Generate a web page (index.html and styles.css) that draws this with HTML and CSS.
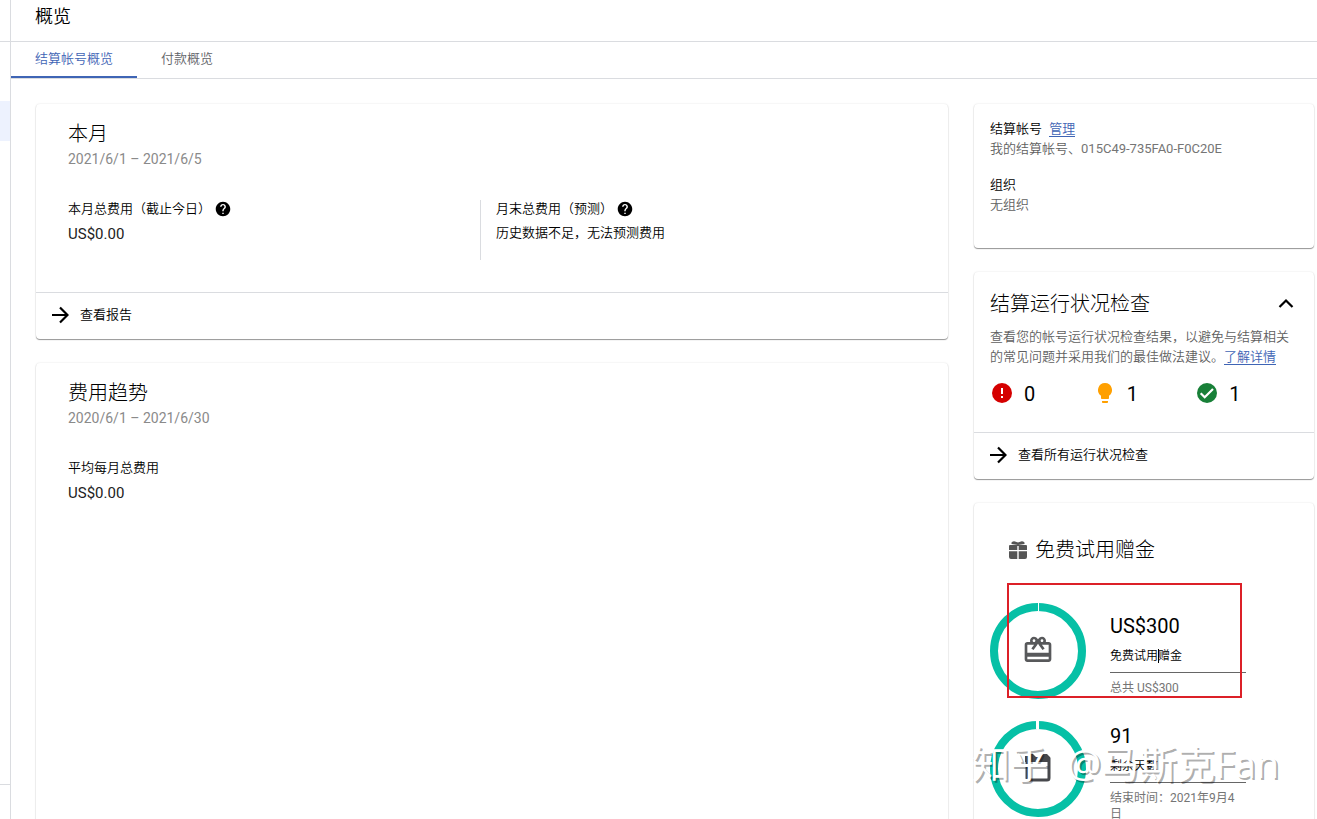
FILE: index.html
```html
<!DOCTYPE html>
<html lang="zh-CN">
<head>
<meta charset="utf-8">
<meta name="viewport" content="width=device-width, initial-scale=1">
<title>概览</title>
<link rel="stylesheet" href="styles.css">
</head>
<body>
<div class="app">
  <aside class="rail">
    <div class="rail-head"></div>
    <div class="rail-active"></div>
    <div class="rail-foot"></div>
  </aside>
  <main class="main">
    <header class="page-header"><h1 class="page-title">概览</h1></header>
    <nav class="tabs">
      <a class="tab tab-active" href="#account">结算帐号概览</a>
      <a class="tab" href="#payment">付款概览</a>
    </nav>
    <div class="content">
      <div class="column">
        <section class="card">
          <div class="card-body">
            <h2 class="card-title">本月</h2>
            <p class="period">2021/6/1 – 2021/6/5</p>
            <div class="metrics">
              <div class="metric">
                <div class="metric-label">本月总费用（截止今日）
                  <button class="icon-button" type="button" aria-label="帮助"><svg width="16" height="16" viewBox="1 1 22 22"><path d="M12 2C6.480 2 2 6.480 2 12s4.480 10 10 10 10-4.480 10-10S17.520 2 12 2zm1 17h-2v-2h2v2zm2.070-7.750l-.9.920C13.450 12.900 13 13.500 13 15h-2v-.5c0-1.100.45-2.100 1.170-2.830l1.240-1.260c.37-.36.59-.86.59-1.410 0-1.100-.9-2-2-2s-2 .9-2 2H8c0-2.210 1.790-4 4-4s4 1.790 4 4c0 .88-.36 1.680-.93 2.250z"/></svg></button>
                </div>
                <div class="amount">US$0.00</div>
              </div>
              <div class="metric metric-split">
                <div class="metric-label">月末总费用（预测）
                  <button class="icon-button" type="button" aria-label="帮助"><svg width="16" height="16" viewBox="1 1 22 22"><path d="M12 2C6.480 2 2 6.480 2 12s4.480 10 10 10 10-4.480 10-10S17.520 2 12 2zm1 17h-2v-2h2v2zm2.070-7.750l-.9.920C13.450 12.900 13 13.500 13 15h-2v-.5c0-1.100.45-2.100 1.170-2.830l1.240-1.260c.37-.36.59-.86.59-1.410 0-1.100-.9-2-2-2s-2 .9-2 2H8c0-2.210 1.790-4 4-4s4 1.790 4 4c0 .88-.36 1.680-.93 2.250z"/></svg></button>
                </div>
                <div class="metric-note">历史数据不足，无法预测费用</div>
              </div>
            </div>
          </div>
          <a class="card-link" href="#report"><svg width="18" height="18" viewBox="3 3 18 18"><path d="M4 12h15M12 4.500l7.500 7.500-7.500 7.500" fill="none" stroke="#000" stroke-width="2.200"/></svg>查看报告</a>
        </section>
        <section class="card card-trend">
          <div class="card-body">
            <h2 class="card-title">费用趋势</h2>
            <p class="period">2020/6/1 – 2021/6/30</p>
            <div class="metrics">
              <div class="metric">
                <div class="metric-label">平均每月总费用</div>
                <div class="amount">US$0.00</div>
              </div>
            </div>
          </div>
        </section>
      </div>

      <div class="column">
        <section class="card account">
          <h2 class="account-title">结算帐号 <a class="link" href="#manage">管理</a></h2>
          <p class="account-text">我的结算帐号、<span class="account-id">015C49-735FA0-F0C20E</span></p>
          <h2 class="account-title account-org">组织</h2>
          <p class="account-text">无组织</p>
        </section>

        <section class="card">
          <div class="health">
            <div class="health-head">
              <h2 class="health-title">结算运行状况检查</h2>
              <button class="icon-button" type="button" aria-label="收起"><svg width="24" height="24" viewBox="0 0 24 24"><path d="M5.500 15l6.500-6.500 6.500 6.500" fill="none" stroke="#000" stroke-width="2.200"/></svg></button>
            </div>
            <p class="health-text">查看您的帐号运行状况检查结果，以避免与结算相关的常见问题并采用我们的最佳做法建议。<a class="link" href="#more">了解详情</a></p>
            <div class="checks">
              <div class="check"><svg width="24" height="24" viewBox="0 0 24 24"><circle cx="12" cy="11" r="10" fill="#d50000"/><path d="M11 6h2v6h-2zM11 14h2v2h-2z" fill="#fff"/></svg>0</div>
              <div class="check"><svg width="24" height="24" viewBox="0 0 24 24"><path d="M9 20c0 .5.4 1 1 1h4c.6 0 1-.5 1-1v-1H9zM12 1a7 7 0 0 0-4 12.740V16c0 .55.45 1 1 1h6c.55 0 1-.45 1-1v-2.260A7 7 0 0 0 12 1z" fill="#ffa000"/></svg>1</div>
              <div class="check"><svg width="24" height="24" viewBox="0 0 24 24"><circle cx="12" cy="11" r="10" fill="#188038"/><path d="M5.700 11.300l4 4 8.300-8.300" fill="none" stroke="#fff" stroke-width="2.200"/></svg>1</div>
            </div>
          </div>
          <a class="card-link" href="#health"><svg width="18" height="18" viewBox="3 3 18 18"><path d="M4 12h15M12 4.500l7.500 7.500-7.500 7.500" fill="none" stroke="#000" stroke-width="2.200"/></svg>查看所有运行状况检查</a>
        </section>

        <section class="card trial">
          <h2 class="trial-title"><svg width="18" height="18" viewBox="0 0 18 18"><path d="M1 4h16q1 0 1 1v4H9.700V5H8.300v4H0V5q0-1 1-1zM0 10.300h8.300V18H2q-2 0-2-2zM9.700 10.300H18V16q0 2-2 2H9.700zM2.500 3V1.500Q4 0 6 .4L9 1.500l3-1.100q2-.4 3.500 1.100V3L9 4z" fill="#555"/></svg>免费试用赠金</h2>
          <div class="meter-list">
            <div class="meter">
              <svg class="ring" viewBox="0 0 96 96"><circle cx="48" cy="48" r="44" fill="none" stroke="#06c0a6" stroke-width="8"/><path d="M48.500 0v8" stroke="#fff"/><svg x="32" y="31" width="32" height="32" viewBox="0 0 24 24"><path d="M20 6h-2.180c.11-.31.18-.65.18-1 0-1.660-1.340-3-3-3-1.050 0-1.960.54-2.500 1.350l-.5.670-.5-.68C10.960 2.540 10.050 2 9 2 7.340 2 6 3.340 6 5c0 .35.070.69.18 1H4c-1.110 0-1.990.89-1.990 2L2 19c0 1.110.89 2 2 2h16c1.110 0 2-.89 2-2V8c0-1.110-.89-2-2-2zm-5-2c.55 0 1 .45 1 1s-.45 1-1 1-1-.45-1-1 .45-1 1-1zM9 4c.55 0 1 .45 1 1s-.45 1-1 1-1-.45-1-1 .45-1 1-1zm11 15H4v-2h16v2zm0-5H4V8h5.080L7 10.830 8.620 12 11 8.760l1-1.360 1 1.360L15.380 12 17 10.830 14.920 8H20v6z" fill="#58595b"/></svg></svg>
              <div class="meter-info">
                <div class="meter-value">US$300</div>
                <div class="meter-label">免费试用<span class="caret"></span>赠金</div>
                <div class="meter-note">总共 US$300</div>
              </div>
            </div>
            <div class="meter">
              <svg class="ring" viewBox="0 0 96 96"><circle cx="48" cy="48" r="44" fill="none" stroke="#06c0a6" stroke-width="8"/><path d="M47.500 0v8" stroke="#fff" stroke-width="3"/><path d="M37 38h22v19q0 2-2 2H39q-2 0-2-2z" fill="none" stroke="#47484c" stroke-width="3"/><path d="M35 35h4v-2h4l3 3h4l3-3h4l3 3v5H35z" fill="#47484c"/></svg>
              <div class="meter-info">
                <div class="meter-value">91</div>
                <div class="meter-label">剩余天数</div>
                <div class="meter-note">结束时间：2021年9月4日</div>
              </div>
            </div>
            <div class="highlight"></div>
            <div class="watermark"><span>知乎</span><span>@马斯克Fan</span></div>
          </div>
        </section>
      </div>
    </div>
  </main>
</div>
</body>
</html>
```
FILE: styles.css
```css
* { box-sizing: border-box; }
body {
  margin: 0;
  background: #fff;
  color: #000;
  font: 350 13px/20px Roboto, "Noto Sans CJK SC", sans-serif;
}
h1, h2, p { margin: 0; font-weight: inherit; }
svg { display: block; flex: none; }

.app { display: flex; height: 100vh; overflow: hidden; }
.rail {
  display: flex;
  flex-direction: column;
  flex: none;
  width: 11px;
  border-right: 1px solid #dadce0;
}
.rail-head { height: 42px; border-bottom: 1px solid #dadce0; }
.rail-active { height: 40px; margin-top: 59px; background: #edf2fe; }
.rail-foot { height: 35px; margin-top: auto; border-top: 1px solid #dadce0; }

.main { flex: 1; min-width: 0; }
.page-header {
  height: 42px;
  padding: 3px 24px;
  border-bottom: 1px solid #dadce0;
}
.page-title { font-size: 18px; line-height: 28px; }
.tabs { display: flex; border-bottom: 1px solid #dadce0; }
.tab {
  padding: 7px 24px;
  border-bottom: 2px solid transparent;
  color: #5f6368;
  text-decoration: none;
}
.tab-active { border-bottom-color: #3f65b5; color: #3f65b5; }

.content {
  display: grid;
  grid-template-columns: minmax(0, 1fr) 340px;
  gap: 26px;
  padding: 25px 3px 24px 25px;
}
.column { display: flex; flex-direction: column; gap: 24px; }
.card {
  border-radius: 4px;
  background: #fff;
  box-shadow: 0 1px 1px rgba(0, 0, 0, .4), 0 0 2px rgba(0, 0, 0, .12);
}
.card-body { padding: 16px 56px 32px 32px; }
.card-trend { flex: 1; }
.card-title { font-size: 20px; font-weight: 300; line-height: 28px; }
.period { font-size: 14px; font-weight: 400; line-height: 22px; color: #8a8a8a; }
.metrics {
  display: grid;
  grid-template-columns: 1fr 1fr;
  min-height: 60px;
  margin-top: 30px;
}
.metric-split { padding-left: 15px; border-left: 1px solid #dadce0; }
.metric-label {
  display: flex;
  align-items: center;
  gap: 4px;
  line-height: 18px;
}
.amount { font-size: 15px; font-weight: 400; line-height: 32px; color: #222; }
.metric-note { line-height: 30px; }
.icon-button { padding: 0; border: 0; background: none; }
.card-link {
  display: flex;
  align-items: center;
  gap: 11px;
  padding: 12px 15px 14px;
  border-top: 1px solid #dadce0;
  color: #000;
  text-decoration: none;
}
.link {
  border-bottom: 1px solid #3f65b5;
  color: #3f65b5;
  text-decoration: none;
}

.account { padding: 15px 16px 33px; }
.account-title { font-size: 13px; }
.account-title .link { margin-left: 4px; }
.account-org { margin-top: 16px; }
.account-text { color: #5f5f5f; }
.account-id { font-weight: 400; color: #757575; }

.health { padding: 16px 16px 26px; }
.health-head { display: flex; align-items: center; justify-content: space-between; }
.health-title { font-size: 20px; font-weight: 300; line-height: 32px; }
.health-text { margin-top: 7px; color: #5f5f5f; }
.checks {
  display: grid;
  grid-template-columns: repeat(3, 1fr);
  margin-top: 15px;
}
.check {
  display: flex;
  align-items: center;
  gap: 10px;
  font-size: 20px;
  font-weight: 400;
  line-height: 24px;
}

.trial { padding: 33px 16px 32px; }
.trial-title {
  display: flex;
  align-items: center;
  gap: 8px;
  padding-left: 19px;
  font-size: 20px;
  line-height: 28px;
  font-weight: 300;
}
.meter-list {
  position: relative;
  display: flex;
  flex-direction: column;
  gap: 17px;
  margin-top: 39px;
}
.meter { display: flex; align-items: center; gap: 24px; }
.ring { width: 96px; height: 96px; }
.meter-info { width: 136px; font-size: 12px; }
.meter-value { font-size: 20px; font-weight: 400; line-height: 40px; }
.meter-label { padding-bottom: 6px; border-bottom: 1px solid #666; }
.caret {
  position: absolute;
  width: 1px;
  height: 14px;
  margin-top: 3px;
  background: #000;
}
.meter-note { padding-top: 7px; font-weight: 400; line-height: 16px; color: #757575; }
.highlight {
  position: absolute;
  top: -20px;
  left: 17px;
  width: 235px;
  height: 115px;
  border: 2px solid #dc2028;
}
.watermark {
  position: absolute;
  top: 136px;
  left: -18px;
  display: flex;
  gap: 19px;
  color: #fff;
  font-family: "Open Sans", "Noto Sans CJK SC", sans-serif;
  font-size: 38px;
  font-weight: 400;
  line-height: 48px;
  white-space: nowrap;
  text-shadow: 2px 2px 0 rgba(0, 0, 0, .32);
}
```
